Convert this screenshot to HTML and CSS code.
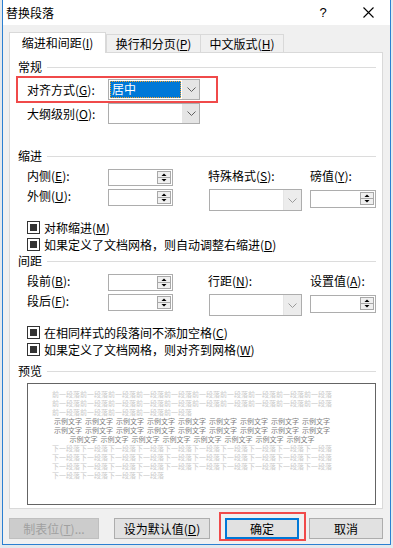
FILE: index.html
```html
<!DOCTYPE html>
<html lang="zh-CN">
<head>
    <meta charset="UTF-8">
    <title>替换段落</title>
    <link rel="stylesheet" href="styles.css">
</head>
<body>
    <div class="window">
        <div class="titlebar">
            <span class="title">替换段落</span>
            <span class="help">?</span>
            <span class="close">
                <svg width="11" height="11" viewBox="0 0 11 11"><path d="M0.5 0.5 L10.5 10.5 M10.5 0.5 L0.5 10.5" stroke="#000" stroke-width="1.1"/></svg>
            </span>
        </div>

        <div class="tabs">
            <div class="tab active"><span>缩进和间距(<u>I</u>)</span></div>
            <div class="tab tab-2"><span>换行和分页(<u>P</u>)</span></div>
            <div class="tab tab-3"><span>中文版式(<u>H</u>)</span></div>
        </div>

        <div class="panel">
            <div class="group-title"><span>常规</span></div>
            <div class="row first">
                <span class="label">对齐方式(<u>G</u>):</span>
                <div class="combo short">
                    <div class="combo-value selected"><span>居中</span></div>
                    <div class="combo-btn">
                        <svg width="9" height="5" viewBox="0 0 9 5"><path d="M0.5 0.5 L4.5 4.5 L8.5 0.5" fill="none" stroke="#606060"/></svg>
                    </div>
                </div>
                <div class="mark"></div>
            </div>
            <div class="row second">
                <span class="label">大纲级别(<u>O</u>):</span>
                <div class="combo short">
                    <div class="combo-value"></div>
                    <div class="combo-btn">
                        <svg width="9" height="5" viewBox="0 0 9 5"><path d="M0.5 0.5 L4.5 4.5 L8.5 0.5" fill="none" stroke="#606060"/></svg>
                    </div>
                </div>
            </div>

            <div class="group-title indent-title"><span>缩进</span></div>
            <div class="fields">
                <span class="label">内侧(<u>E</u>):</span>
                <div class="spin">
                    <div class="spin-btn"><svg width="14" height="13" viewBox="0 0 14 13"><rect x="0.5" y="0.5" width="13" height="12" fill="#f0f0f0" stroke="#a8a8a8"/><line x1="1" y1="6.5" x2="13" y2="6.5" stroke="#a8a8a8"/><path d="M7 2.5 L9.5 5 L4.5 5 Z" fill="#000"/><path d="M4.5 8 L9.5 8 L7 10.5 Z" fill="#000"/></svg></div>
                </div>
                <span class="label">特殊格式(<u>S</u>):</span>
                <span class="label">磅值(<u>Y</u>):</span>

                <span class="label">外侧(<u>U</u>):</span>
                <div class="spin">
                    <div class="spin-btn"><svg width="14" height="13" viewBox="0 0 14 13"><rect x="0.5" y="0.5" width="13" height="12" fill="#f0f0f0" stroke="#a8a8a8"/><line x1="1" y1="6.5" x2="13" y2="6.5" stroke="#a8a8a8"/><path d="M7 2.5 L9.5 5 L4.5 5 Z" fill="#000"/><path d="M4.5 8 L9.5 8 L7 10.5 Z" fill="#000"/></svg></div>
                </div>
                <div class="combo wide">
                    <div class="combo-value"></div>
                    <div class="combo-btn light">
                        <svg width="9" height="5" viewBox="0 0 9 5"><path d="M0.5 0.5 L4.5 4.5 L8.5 0.5" fill="none" stroke="#9a9a9a"/></svg>
                    </div>
                </div>
                <div class="spin">
                    <div class="spin-btn"><svg width="14" height="13" viewBox="0 0 14 13"><rect x="0.5" y="0.5" width="13" height="12" fill="#f0f0f0" stroke="#a8a8a8"/><line x1="1" y1="6.5" x2="13" y2="6.5" stroke="#a8a8a8"/><path d="M7 2.5 L9.5 5 L4.5 5 Z" fill="#000"/><path d="M4.5 8 L9.5 8 L7 10.5 Z" fill="#000"/></svg></div>
                </div>
            </div>
            <div class="checks">
                <div class="check"><span class="box"></span><span>对称缩进(<u>M</u>)</span></div>
                <div class="check"><span class="box"></span><span>如果定义了文档网格，则自动调整右缩进(<u>D</u>)</span></div>
            </div>

            <div class="group-title"><span>间距</span></div>
            <div class="fields">
                <span class="label">段前(<u>B</u>):</span>
                <div class="spin">
                    <div class="spin-btn"><svg width="14" height="13" viewBox="0 0 14 13"><rect x="0.5" y="0.5" width="13" height="12" fill="#f0f0f0" stroke="#a8a8a8"/><line x1="1" y1="6.5" x2="13" y2="6.5" stroke="#a8a8a8"/><path d="M7 2.5 L9.5 5 L4.5 5 Z" fill="#000"/><path d="M4.5 8 L9.5 8 L7 10.5 Z" fill="#000"/></svg></div>
                </div>
                <span class="label">行距(<u>N</u>):</span>
                <span class="label">设置值(<u>A</u>):</span>

                <span class="label">段后(<u>F</u>):</span>
                <div class="spin">
                    <div class="spin-btn"><svg width="14" height="13" viewBox="0 0 14 13"><rect x="0.5" y="0.5" width="13" height="12" fill="#f0f0f0" stroke="#a8a8a8"/><line x1="1" y1="6.5" x2="13" y2="6.5" stroke="#a8a8a8"/><path d="M7 2.5 L9.5 5 L4.5 5 Z" fill="#000"/><path d="M4.5 8 L9.5 8 L7 10.5 Z" fill="#000"/></svg></div>
                </div>
                <div class="combo wide">
                    <div class="combo-value"></div>
                    <div class="combo-btn light">
                        <svg width="9" height="5" viewBox="0 0 9 5"><path d="M0.5 0.5 L4.5 4.5 L8.5 0.5" fill="none" stroke="#9a9a9a"/></svg>
                    </div>
                </div>
                <div class="spin">
                    <div class="spin-btn"><svg width="14" height="13" viewBox="0 0 14 13"><rect x="0.5" y="0.5" width="13" height="12" fill="#f0f0f0" stroke="#a8a8a8"/><line x1="1" y1="6.5" x2="13" y2="6.5" stroke="#a8a8a8"/><path d="M7 2.5 L9.5 5 L4.5 5 Z" fill="#000"/><path d="M4.5 8 L9.5 8 L7 10.5 Z" fill="#000"/></svg></div>
                </div>
            </div>
            <div class="checks">
                <div class="check"><span class="box"></span><span>在相同样式的段落间不添加空格(<u>C</u>)</span></div>
                <div class="check"><span class="box"></span><span>如果定义了文档网格，则对齐到网格(<u>W</u>)</span></div>
            </div>

            <div class="group-title preview-title"><span>预览</span></div>
            <div class="preview">
                <div class="pv-lines">
                    <div class="pv-line faint">前一段落前一段落前一段落前一段落前一段落前一段落前一段落前一段落前一段落前一段落</div>
                    <div class="pv-line faint">前一段落前一段落前一段落前一段落前一段落前一段落前一段落前一段落前一段落前一段落</div>
                    <div class="pv-line faint">前一段落前一段落前一段落前一段落前一段落</div>
                    <div class="pv-line sample"><span>示例文字</span><span>示例文字</span><span>示例文字</span><span>示例文字</span><span>示例文字</span><span>示例文字</span><span>示例文字</span><span>示例文字</span><span>示例文字</span></div>
                    <div class="pv-line sample"><span>示例文字</span><span>示例文字</span><span>示例文字</span><span>示例文字</span><span>示例文字</span><span>示例文字</span><span>示例文字</span><span>示例文字</span><span>示例文字</span></div>
                    <div class="pv-line sample"><span>示例文字</span><span>示例文字</span><span>示例文字</span><span>示例文字</span><span>示例文字</span><span>示例文字</span><span>示例文字</span><span>示例文字</span></div>
                    <div class="pv-line faint">下一段落下一段落下一段落下一段落下一段落下一段落下一段落下一段落下一段落下一段落</div>
                    <div class="pv-line faint">下一段落下一段落下一段落下一段落下一段落下一段落下一段落下一段落下一段落下一段落</div>
                    <div class="pv-line faint">下一段落下一段落下一段落下一段落下一段落下一段落下一段落下一段落下一段落下一段落</div>
                    <div class="pv-line faint">下一段落下一段落下一段落下一段落</div>
                </div>
            </div>
        </div>

        <div class="buttons">
            <div class="btn disabled tabs-btn"><span>制表位(<u>T</u>)...</span></div>
            <div class="btn default-btn"><span>设为默认值(<u>D</u>)</span></div>
            <div class="btn ok-btn"><span>确定</span><div class="mark"></div></div>
            <div class="btn cancel-btn"><span>取消</span></div>
        </div>
    </div>
</body>
</html>
```

FILE: styles.css
```css
* {
    margin: 0;
    padding: 0;
    box-sizing: border-box;
}

body {
    width: 393px;
    height: 548px;
    overflow: hidden;
    background: #e4e8ec;
    font-family: "Noto Sans CJK SC", sans-serif;
    font-size: 12px;
    color: #000;
}

u {
    text-decoration: underline;
    text-underline-offset: 1px;
}

/* Window frame */
.window {
    margin-left: 2px;
    width: 389px;
    height: 545px;
    border: 1px solid #2b7fd1;
    border-top: none;
    background: #f0f0f0;
    display: flex;
    flex-direction: column;
}

.titlebar {
    height: 25px;
    background: #fff;
    display: flex;
    align-items: center;
    padding: 0 12px 0 3px;
    flex-shrink: 0;
}

.title {
    line-height: 16px;
}

.help {
    margin-left: auto;
    width: 20px;
    text-align: center;
    font-family: "Liberation Sans", sans-serif;
    font-size: 13px;
}

.close {
    width: 20px;
    margin-left: 25px;
    display: flex;
    justify-content: center;
}

/* Tabs */
.tabs {
    display: flex;
    align-items: flex-end;
    height: 20px;
    margin: 7px 0 0 6px;
    position: relative;
    z-index: 1;
    flex-shrink: 0;
}

.tab {
    height: 18px;
    border: 1px solid #d9d9d9;
    border-bottom: none;
    background: #f0f0f0;
    display: flex;
    align-items: center;
    justify-content: center;
    padding-bottom: 1px;
}

.tab.active {
    width: 97px;
    height: 21px;
    margin-bottom: -1px;
    background: #fff;
    padding-bottom: 1px;
}

.tab-2 {
    width: 95px;
}

.tab-3 {
    width: 83px;
    border-left: none;
}

/* Panel */
.panel {
    height: 457px;
    margin: 0 7px 0 6px;
    border: 1px solid #d9d9d9;
    background: #fff;
    padding: 6px 6px 0 8px;
    flex-shrink: 0;
}

.group-title {
    display: flex;
    align-items: center;
    gap: 5px;
    height: 16px;
    line-height: 16px;
}

.group-title::after {
    content: "";
    flex: 1;
    height: 1px;
    background: #dcdcdc;
}

.indent-title {
    margin-top: 24px;
}

.preview-title {
    margin-top: 5px;
}

.label {
    line-height: 14px;
    white-space: nowrap;
}

.row {
    display: flex;
    align-items: center;
    padding-left: 9px;
    position: relative;
}

.row .label {
    width: 81px;
}

.row.first {
    margin-top: 4px;
}

.row.second {
    margin-top: 3px;
}

/* Red annotation frames */
.mark {
    position: absolute;
    border: 2px solid #f04a4a;
    pointer-events: none;
}

.row .mark {
    left: -2px;
    top: -3px;
    width: 202px;
    height: 27px;
}

/* Combo boxes */
.combo {
    display: flex;
    border: 1px solid #adadad;
    background: #fff;
}

.combo.short {
    width: 92px;
    height: 21px;
}

.combo.wide {
    width: 93px;
    height: 22px;
    margin-left: 1px;
}

.combo-value {
    flex: 1;
    padding: 1px;
}

.combo-value.selected span {
    display: block;
    height: 17px;
    background: #0078d7;
    color: #fff;
    line-height: 16px;
    padding-left: 2px;
    outline: 1px dotted #f7a32b;
    outline-offset: -1px;
}

.combo-btn {
    width: 17px;
    background: #e5e5e5;
    display: flex;
    align-items: center;
    justify-content: center;
    border-left: 1px solid #e5e5e5;
}

.combo-btn.light {
    width: 18px;
    background: #ececec;
}

/* Spin boxes */
.spin {
    width: 65px;
    height: 17px;
    border: 1px solid #adadad;
    background: #fff;
    display: flex;
    justify-content: flex-end;
    padding: 1px 1px 0 0;
}

.spin-btn {
    display: flex;
}

.fields {
    display: grid;
    grid-template-columns: 81px 100px 102px 66px;
    grid-template-rows: 20px 22px;
    margin: 5px 0 0 9px;
    align-items: start;
}

.fields .spin:last-child {
    width: 66px;
    height: 18px;
    margin-top: 1px;
}

/* Check boxes */
.checks {
    margin-top: 8px;
    padding-left: 9px;
}

.check {
    display: flex;
    align-items: center;
    gap: 4px;
    height: 17px;
    white-space: nowrap;
}

.box {
    width: 13px;
    height: 13px;
    border: 1px solid #333;
    padding: 2px;
    background: #fff;
}

.box::before {
    content: "";
    display: block;
    width: 7px;
    height: 7px;
    background: #333;
}

/* Preview */
.preview {
    margin: 4px 0 0 9px;
    width: 349px;
    height: 122px;
    border: 1px solid #646464;
    background: #fff;
    padding: 6px 0 0 24px;
}

.pv-lines {
    width: 280px;
}

.pv-line {
    font-size: 7px;
    line-height: 9px;
    height: 9px;
    white-space: nowrap;
}

.pv-line.faint {
    color: #c9c9c9;
}

.pv-line.sample {
    color: #7d7d7d;
    text-align: center;
}

.pv-line.sample span {
    margin: 0 1.5px;
}

/* Buttons */
.buttons {
    display: flex;
    height: 21px;
    margin: 9px 0 0 6px;
    flex-shrink: 0;
}

.btn {
    height: 21px;
    border: 1px solid #adadad;
    background: #e1e1e1;
    display: flex;
    align-items: center;
    justify-content: center;
    position: relative;
    white-space: nowrap;
}

.btn.disabled {
    background: #cccccc;
    border-color: #bfbfbf;
    color: #a0a0a0;
}

.tabs-btn {
    width: 90px;
}

.default-btn {
    width: 96px;
    margin-left: 15px;
}

.ok-btn {
    width: 74px;
    margin-left: 15px;
    border: 2px solid #0078d7;
}

.ok-btn .mark {
    left: -8px;
    top: -8px;
    width: 87px;
    height: 29px;
}

.cancel-btn {
    width: 74px;
    margin-left: 10px;
}
```
